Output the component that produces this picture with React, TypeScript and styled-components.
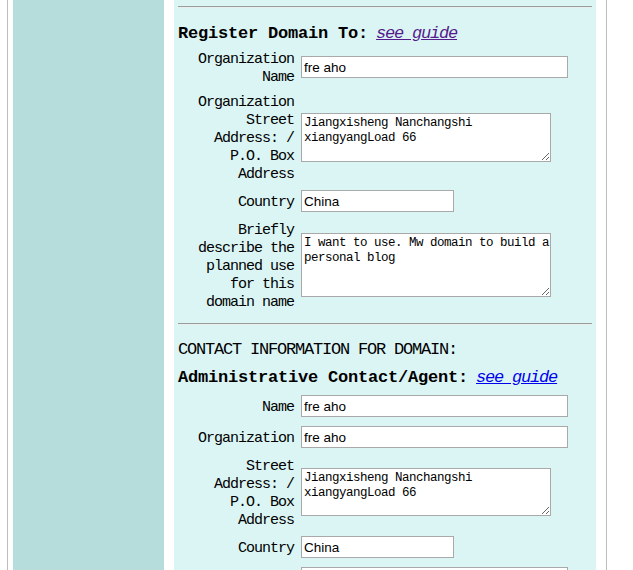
import styled, { createGlobalStyle } from "styled-components"

const GlobalStyle = createGlobalStyle`
  html, body {
    margin: 0;
    height: 100%;
    overflow: hidden;
    background: #fff;
  }
  #root {
    height: 100%;
  }
`

const Page = styled.div`
  display: flex;
  box-sizing: border-box;
  width: 600px;
  min-height: 100%;
  margin-left: 7px;
  padding: 0 10px 0 5px;
  gap: 10px;
  border-left: 1px solid #bdbdbd;
  border-right: 1px solid #bdbdbd;
`

const Sidebar = styled.div`
  width: 151px;
  flex-shrink: 0;
  background: #b7dcdc;
`

const Main = styled.div`
  flex: 1;
  padding: 6px 4px 0 4px;
  background: #dbf5f5;
  font-family: "Liberation Mono", "DejaVu Sans Mono", monospace;
  color: #000;
`

const Rule = styled.hr<{ $top?: number }>`
  margin: ${p => p.$top ?? 0}px 0 0 0;
  height: 0;
  border: none;
  border-top: 1px solid #9c9c9c;
  border-bottom: 1px solid #e6eeee;
`

const SectionTitle = styled.h3<{ $top: number; $bottom: number }>`
  margin: ${p => p.$top}px 0 ${p => p.$bottom}px 0;
  font-size: 17px;
  line-height: 22px;
  font-weight: bold;
  letter-spacing: -0.2px;
`

const GuideLink = styled.a<{ $visited?: boolean }>`
  margin-left: 8px;
  font-weight: normal;
  font-style: italic;
  letter-spacing: -1.2px;
  color: ${p => (p.$visited ? "#551a8b" : "#0000ee")};
  text-decoration: underline;
`

const Caption = styled.div`
  margin-top: 14px;
  font-size: 17px;
  line-height: 22px;
  letter-spacing: -1.2px;
`

const FormGrid = styled.div`
  display: grid;
  grid-template-columns: 116px 1fr;
  column-gap: 7px;
  row-gap: 7px;
  align-items: center;
`

const Label = styled.label`
  padding-top: 2px;
  margin-bottom: -2px;
  text-align: right;
  font-size: 15px;
  line-height: 18px;
  letter-spacing: -1px;
`

const TextInput = styled.input<{ $wide?: boolean }>`
  box-sizing: border-box;
  width: ${p => (p.$wide ? 267 : 153)}px;
  height: 22px;
  margin: 1px 0;
  padding: 0 2px;
  border: 1px solid #a9a9a9;
  background: #fff;
  font-family: "Liberation Sans", Arial, sans-serif;
  font-size: 13.5px;
  color: #000;
  outline: none;
`

const TextArea = styled.textarea<{ $height: number }>`
  box-sizing: border-box;
  display: block;
  width: 250px;
  height: ${p => p.$height}px;
  margin: 0;
  padding: 2px 0 2px 2px;
  border: 1px solid #a9a9a9;
  background: #fff;
  font-family: "Liberation Mono", "DejaVu Sans Mono", monospace;
  font-size: 12.5px;
  line-height: 15px;
  letter-spacing: -0.5px;
  color: #000;
  outline: none;
  overflow: hidden;
`

type Field =
  | { kind: "input"; label: string[]; value: string; wide?: boolean }
  | { kind: "area"; label: string[]; value: string; height: number }

const domainFields: Field[] = [
  { kind: "input", label: ["Organization", "Name"], value: "fre aho", wide: true },
  {
    kind: "area",
    label: ["Organization", "Street", "Address: /", "P.O. Box", "Address"],
    value: "Jiangxisheng Nanchangshi\nxiangyangLoad 66",
    height: 49,
  },
  { kind: "input", label: ["Country"], value: "China" },
  {
    kind: "area",
    label: ["Briefly", "describe the", "planned use", "for this", "domain name"],
    value: "I want to use. Mw domain to build a personal blog",
    height: 64,
  },
]

const contactFields: Field[] = [
  { kind: "input", label: ["Name"], value: "fre aho", wide: true },
  { kind: "input", label: ["Organization"], value: "fre aho", wide: true },
  {
    kind: "area",
    label: ["Street", "Address: /", "P.O. Box", "Address"],
    value: "Jiangxisheng Nanchangshi\nxiangyangLoad 66",
    height: 48,
  },
  { kind: "input", label: ["Country"], value: "China" },
  // next row only peeks in at the bottom edge
  { kind: "input", label: [], value: "", wide: true },
]

const Fields = ({ fields }: { fields: Field[] }) => (
  <FormGrid>
    {fields.map((f, i) => (
      <div key={i} style={{ display: "contents" }}>
        <Label>
          {f.label.map((line, j) => (
            <div key={j}>{line}</div>
          ))}
        </Label>
        <div>
          {f.kind === "input" ? (
            <TextInput $wide={f.wide} defaultValue={f.value} />
          ) : (
            <TextArea $height={f.height} defaultValue={f.value} spellCheck />
          )}
        </div>
      </div>
    ))}
  </FormGrid>
)

export default function App() {
  return (
    <>
      <GlobalStyle />
      <Page>
        <Sidebar />
        <Main>
          <Rule />
          <SectionTitle $top={15} $bottom={4}>
            Register Domain To:
            <GuideLink href="#" $visited>see guide</GuideLink>
          </SectionTitle>
          <Fields fields={domainFields} />
          <Rule $top={13} />
          <Caption>CONTACT INFORMATION FOR DOMAIN:</Caption>
          <SectionTitle $top={6} $bottom={5}>
            Administrative Contact/Agent:
            <GuideLink href="#">see guide</GuideLink>
          </SectionTitle>
          <Fields fields={contactFields} />
        </Main>
      </Page>
    </>
  )
}
